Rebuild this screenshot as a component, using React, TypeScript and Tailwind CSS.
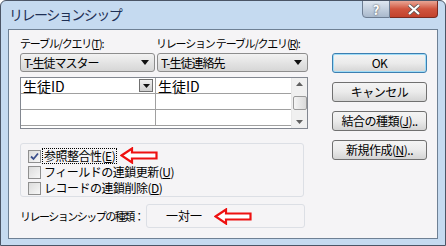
const font = { fontFamily: '"Noto Sans CJK JP", "Noto Sans", sans-serif' };

function Arrow() {
    return (
        <svg width="38" height="17" viewBox="0 0 38 17">
            <polygon
                points="1.5,8.5 12,1.5 12,5.5 36.5,5.5 36.5,11.5 12,11.5 12,15.5"
                fill="#ffffff"
                stroke="#ee1111"
                strokeWidth="2.2"
                strokeLinejoin="miter"
            />
        </svg>
    );
}

function Combo({ label, width }: { label: string; width: string }) {
    return (
        <div
            className={`${width} h-[19px] flex items-center justify-between rounded-[3px] border border-[#8d8d8d] bg-gradient-to-b from-[#f2f2f2] to-[#d6d6d6] pl-[3px] pr-[5px] text-[12px] tracking-[-1px] leading-none text-black whitespace-nowrap`}
        >
            <span>{label}</span>
            <svg width="8" height="5" viewBox="0 0 8 5"><polygon points="0,0 8,0 4,5" fill="#111" /></svg>
        </div>
    );
}

function Check({ checked, children }: { checked?: boolean; children: React.ReactNode }) {
    return (
        <div className="flex items-center h-[16px]">
            <div className="w-[13px] h-[13px] border border-[#8f8f8f] bg-gradient-to-br from-[#dcdcdc] to-[#f7f7f7] flex items-center justify-center">
                {checked && (
                    <svg width="9" height="9" viewBox="0 0 9 9">
                        <path d="M1 4.5 L3.5 7 L8 1.5" fill="none" stroke="#3b4f8c" strokeWidth="1.8" />
                    </svg>
                )}
            </div>
            <div className={`ml-[2px] px-[1px] text-[12px] tracking-[-0.5px] leading-[14px] text-black whitespace-nowrap ${checked ? 'outline outline-1 outline-dotted outline-black' : ''}`}>
                {children}
            </div>
        </div>
    );
}

function Btn({ children, primary }: { children: React.ReactNode; primary?: boolean }) {
    return (
        <div
            className={`h-[20px] w-[95px] flex items-center justify-center rounded-[3px] border text-[12px] tracking-[-0.5px] leading-none text-black whitespace-nowrap bg-gradient-to-b from-[#f4f4f4] via-[#ebebeb] to-[#d4d4d4] ${primary ? 'border-[#3c7fb1] shadow-[inset_0_0_0_1px_#9fdcf7]' : 'border-[#707070]'}`}
        >
            {children}
        </div>
    );
}

export default function App() {
    return (
        <div style={font} className="w-[446px] h-[246px] bg-[#c5daf0] border border-[#4b5566] rounded-t-[6px] flex flex-col overflow-hidden">
            {/* タイトルバー */}
            <div className="h-[28px] flex items-start justify-between shrink-0">
                <div className="pl-[8px] pt-[5px] text-[14px] tracking-[-1.5px] leading-[17px] text-[#1e2f55]">リレーションシップ</div>
                <div className="flex mr-[7px] -mt-px">
                    <div className="w-[28px] h-[18px] rounded-bl-[4px] border border-[#6d7d92] bg-gradient-to-b from-[#dfe7f1] to-[#a9b9cc] flex items-center justify-center text-white font-bold text-[13px] leading-none [text-shadow:0_0_2px_#333]">
                        ?
                    </div>
                    <div className="w-[48px] h-[18px] rounded-br-[4px] border border-l-0 border-[#7a2a20] bg-gradient-to-b from-[#e8a595] via-[#d0543e] to-[#c2422c] flex items-center justify-center">
                        <svg width="14" height="11" viewBox="0 0 14 11">
                            <path d="M2 1 L12 10 M12 1 L2 10" stroke="#555" strokeWidth="3.6" />
                            <path d="M2 1 L12 10 M12 1 L2 10" stroke="#fff" strokeWidth="2.2" />
                        </svg>
                    </div>
                </div>
            </div>

            {/* クライアント領域 */}
            <div className="mx-[7px] h-[210px] border border-[#6e8094] bg-[#f5f4f6] flex pl-[11px] pt-[6px]">
                <div className="w-[288px] flex flex-col">
                    <div className="h-[17px] flex text-[11px] tracking-[-1.2px] leading-[14px] text-black whitespace-nowrap">
                        <div className="w-[136px]">テーブル/クエリ(<u>T</u>):</div>
                        <div>リレーション テーブル/クエリ(<u>R</u>):</div>
                    </div>
                    <div className="flex gap-[2px]">
                        <Combo label="T-生徒マスター" width="w-[135px]" />
                        <Combo label="T-生徒連絡先" width="w-[151px]" />
                    </div>
                    <div className="mt-[5px] h-[52px] border border-[#828790] bg-white flex">
                        <div className="flex-1 flex flex-col">
                            {[0, 1, 2].map((r) => (
                                <div key={r} className="h-[16px] flex border-b border-[#a0a0a0]">
                                    <div className="w-[135px] border-r border-[#a0a0a0] flex items-center justify-between pl-[2px] pr-[2px] text-[14px] leading-none">
                                        <span>{r === 0 ? '生徒ID' : ''}</span>
                                        {r === 0 && (
                                            <div className="w-[14px] h-[13px] border border-[#707070] bg-gradient-to-b from-[#f0f0f0] to-[#cfcfcf] flex items-center justify-center">
                                                <svg width="7" height="4" viewBox="0 0 7 4"><polygon points="0,0 7,0 3.5,4" fill="#111" /></svg>
                                            </div>
                                        )}
                                    </div>
                                    <div className="flex-1 flex items-center pl-[2px] text-[14px] leading-none">
                                        {r === 0 ? '生徒ID' : ''}
                                    </div>
                                </div>
                            ))}
                        </div>
                        <div className="w-[16px] border-l border-[#e8e8e8] bg-[#f0f0f0] flex flex-col items-center justify-between py-[4px]">
                            <svg width="7" height="4" viewBox="0 0 7 4"><polygon points="0,4 7,4 3.5,0" fill="#606060" /></svg>
                            <div className="w-[14px] h-[14px] rounded-[2px] border border-[#9a9a9a] bg-gradient-to-r from-[#f4f4f4] to-[#dadada]" />
                            <svg width="7" height="4" viewBox="0 0 7 4"><polygon points="0,0 7,0 3.5,4" fill="#606060" /></svg>
                        </div>
                    </div>

                    <div className="mt-[14px] w-[284px] h-[54px] rounded-[3px] border border-[#dcdfe5] pl-[7px] pt-[4px] flex flex-col">
                        <div className="flex items-center">
                            <Check checked>参照整合性(<u>E</u>)</Check>
                            <div className="ml-[4px] -mt-[2px]"><Arrow /></div>
                        </div>
                        <Check>フィールドの連鎖更新(<u>U</u>)</Check>
                        <Check>レコードの連鎖削除(<u>D</u>)</Check>
                    </div>

                    <div className="mt-[7px] flex items-center">
                        <div className="w-[126px] text-[11px] tracking-[-1.5px] leading-none text-black whitespace-nowrap">リレーションシップの種類：</div>
                        <div className="w-[159px] h-[24px] rounded-[3px] border border-[#dcdfe5] flex items-center pl-[19px]">
                            <span className="text-[12px] leading-none text-black">一対一</span>
                            <div className="ml-[12px]"><Arrow /></div>
                        </div>
                    </div>
                </div>

                <div className="ml-[24px] pt-[17px] flex flex-col gap-[9px]">
                    <Btn primary>OK</Btn>
                    <Btn>キャンセル</Btn>
                    <Btn>結合の種類(<u>J</u>)..</Btn>
                    <Btn>新規作成(<u>N</u>)..</Btn>
                </div>
            </div>
        </div>
    );
}
